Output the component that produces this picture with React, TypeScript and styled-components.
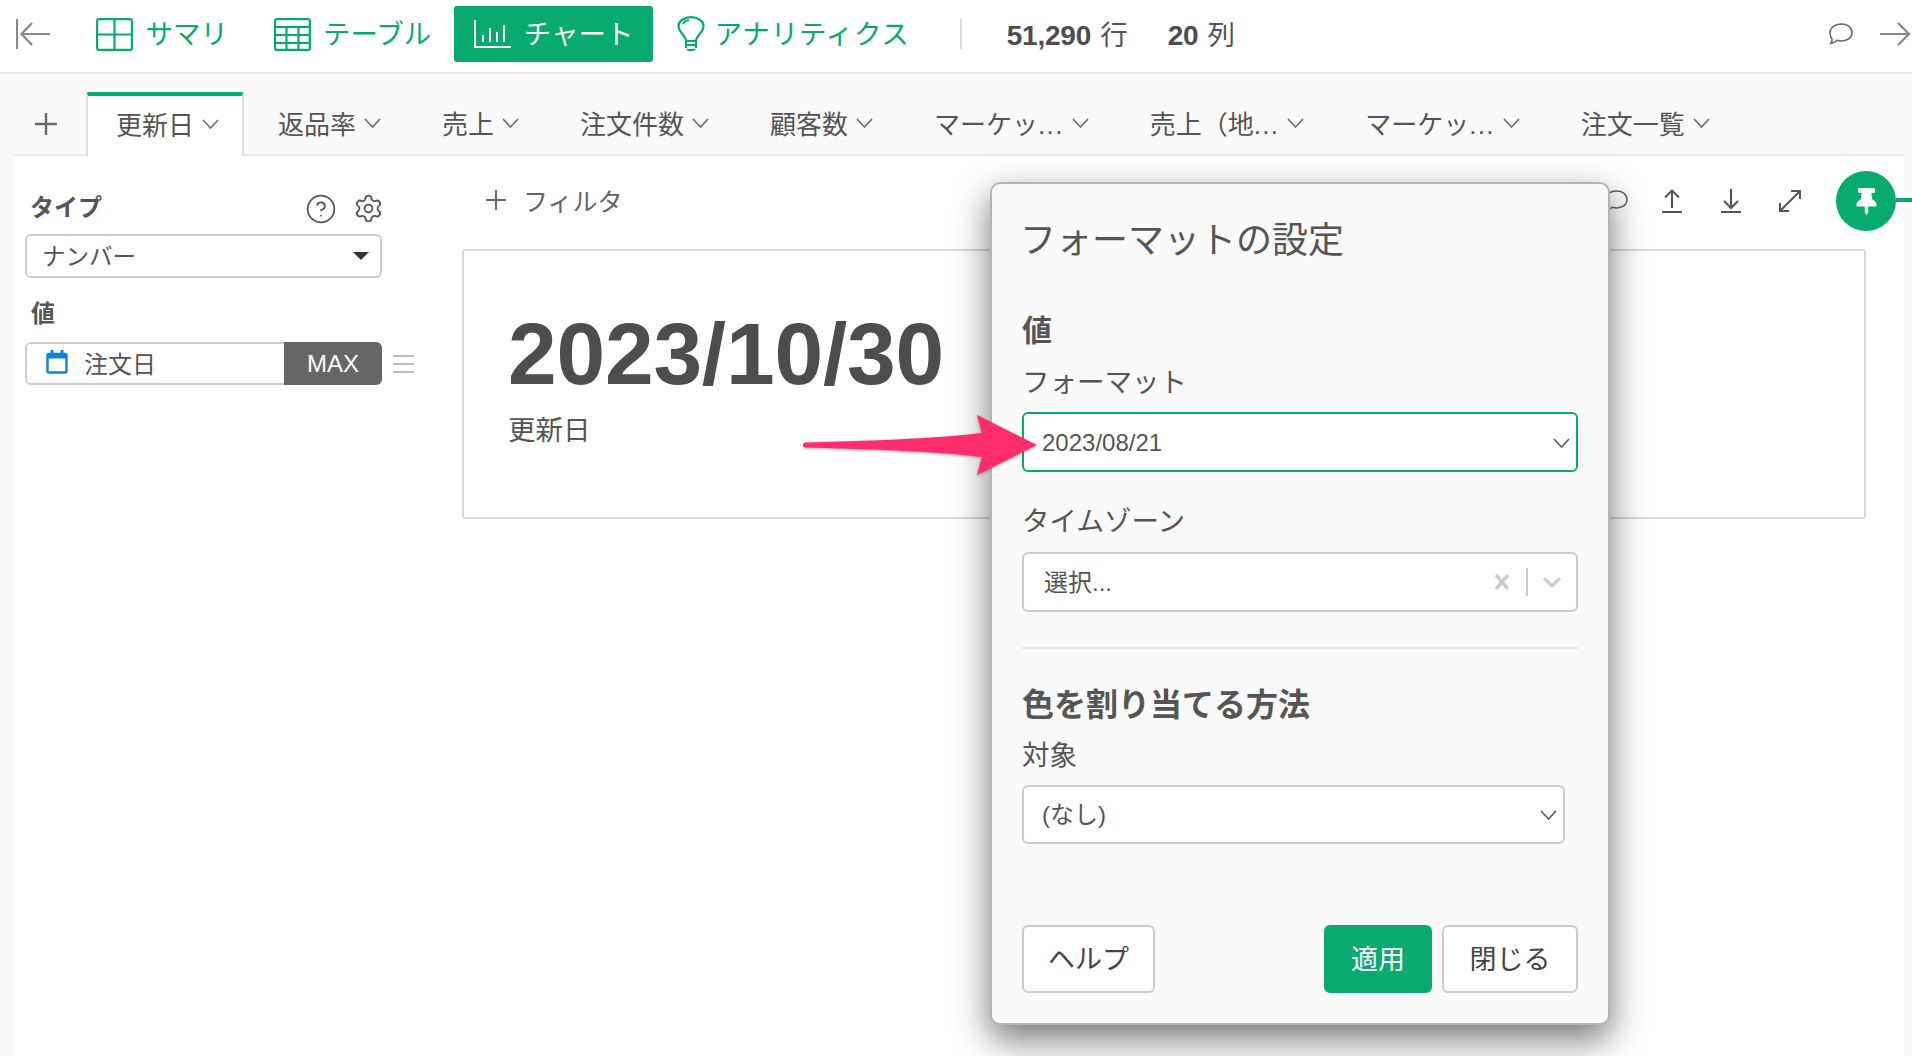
import React from 'react';
import styled, { createGlobalStyle } from 'styled-components';
import { CircleHelp, Settings } from 'lucide-react';
import { FaThumbtack } from 'react-icons/fa';

const GREEN = '#07ab6f';

const GlobalStyle = createGlobalStyle`
  * { box-sizing: border-box; }
  html, body { margin: 0; padding: 0; background: #fff; }
  body {
    font-family: "Liberation Sans", "Noto Sans CJK JP", sans-serif;
    color: #555;
  }
`;

const Page = styled.div`
  position: relative;
  width: 1912px;
  height: 1056px;
  overflow: hidden;
  display: flex;
  flex-direction: column;
  background: #fff;
`;

/* top bar */
const TopBar = styled.header`
  display: flex;
  align-items: center;
  height: 74px;
  flex: none;
  padding: 0 1px 4px 16px;
  border-bottom: 2px solid #e8e8e8;
`;

const NavItem = styled.div<{ $active?: boolean; $left: number; $gap: number }>`
  display: flex;
  align-items: center;
  gap: ${p => p.$gap}px;
  height: 56px;
  margin-left: ${p => p.$left}px;
  padding: 0 19px 0 ${p => (p.$active ? 20 : 18)}px;
  border-radius: 3px;
  font-size: 27.5px;
  color: ${p => (p.$active ? '#fff' : GREEN)};
  background: ${p => (p.$active ? GREEN : 'transparent')};
`;

const NavLabel = styled.span<{ $spread?: number }>`
  padding-bottom: 4px;
  letter-spacing: ${p => p.$spread ?? 0}px;
`;

const Stats = styled.div`
  display: flex;
  align-items: center;
  height: 30px;
  margin-left: 31px;
  padding: 0 0 3px 45px;
  gap: 40px;
  border-left: 2px solid #ddd;
  font-size: 27.5px;
`;

const Stat = styled.span`
  display: flex;
  align-items: baseline;
  gap: 9px;
`;

const StatValue = styled.b`
  font-size: 28px;
  letter-spacing: -0.2px;
  color: #4d4d4d;
`;

const TopRight = styled.div`
  display: flex;
  align-items: center;
  gap: 27px;
  margin-left: auto;
`;

/* tabs */
const Workspace = styled.div`
  flex: 1;
  display: flex;
  flex-direction: column;
  padding: 18px 8px 0 14px;
  background: #fafafa;
`;

const TabRow = styled.div`
  display: flex;
  align-items: flex-end;
  height: 64px;
  flex: none;
  gap: 6px;
  border-bottom: 2px solid #e8e8e8;
`;

const AddTab = styled.div`
  width: 72px;
  margin-right: -6px;
  height: 62px;
  padding: 2px 9px 0 0;
  display: flex;
  align-items: center;
  justify-content: center;
  color: #666;
`;

const Tab = styled.div<{ $active?: boolean }>`
  display: flex;
  align-items: center;
  gap: 8px;
  height: 64px;
  margin-bottom: -2px;
  padding: 0 25px 3px 30px;
  font-size: 26px;
  white-space: nowrap;
  ${p =>
    p.$active
      ? `
    padding: 0 23px 5px 28px;
    margin-right: -2px;
    background: #fff;
    border: 2px solid #ddd;
    border-top: 4px solid ${GREEN};
    border-bottom: 0;
    border-radius: 3px 3px 0 0;
  `
      : ''}
`;

const Dots = styled.span`
  letter-spacing: 1.3px;
`;

/* main area */
const Main = styled.main`
  flex: 1;
  display: flex;
  background: #fff;
`;

const Sidebar = styled.aside`
  width: 448px;
  flex: none;
  padding: 39px 0 0 11px;
`;

const SideHead = styled.div`
  display: flex;
  align-items: center;
  justify-content: space-between;
  width: 356px;
  height: 27px;
  padding-left: 5px;
  margin-bottom: 12px;
`;

const SideLabel = styled.div`
  font-size: 24px;
  font-weight: 700;
  line-height: 27px;
  color: #555;
`;

const HeadTitle = styled(SideLabel)`
  margin-top: -2px;
`;

const HeadIcons = styled.div`
  display: flex;
  align-items: center;
  gap: 16px;
  margin-right: -3px;
  color: #555;
`;

const TypeSelect = styled.div`
  display: flex;
  align-items: center;
  justify-content: space-between;
  width: 357px;
  height: 44px;
  padding: 0 11px 3px 15px;
  border: 2px solid #ccc;
  border-radius: 6px;
  font-size: 23.5px;
`;

const Caret = styled.span`
  width: 0;
  height: 0;
  margin-top: 3px;
  border-left: 8px solid transparent;
  border-right: 8px solid transparent;
  border-top: 8px solid #333;
`;

const ValueLabel = styled(SideLabel)`
  margin: 22px 0 15px 6px;
`;

const ValueRow = styled.div`
  display: flex;
  align-items: center;
  gap: 11px;
`;

const ValuePill = styled.div`
  display: flex;
  align-items: stretch;
  width: 357px;
  height: 43px;
  border: 2px solid #ccc;
  border-radius: 6px;
  font-size: 24px;
`;

const PillField = styled.div`
  flex: 1;
  display: flex;
  align-items: center;
  gap: 16px;
  padding: 0 0 3px 19px;
`;

const PillBadge = styled.div`
  width: 98px;
  margin: -2px -2px -2px 0;
  display: flex;
  align-items: center;
  justify-content: center;
  border-radius: 0 6px 6px 0;
  background: #666;
  color: #fff;
`;

const Handle = styled.div`
  display: flex;
  flex-direction: column;
  gap: 6px;
  width: 21px;
  & > i {
    height: 2px;
    background: #bbb;
  }
`;

const Content = styled.section`
  flex: 1;
  padding-top: 15px;
`;

const Toolbar = styled.div`
  display: flex;
  align-items: center;
  justify-content: space-between;
  width: 1434px;
  height: 60px;
  padding-left: 24px;
`;

const FilterButton = styled.div`
  display: flex;
  align-items: center;
  gap: 17px;
  padding-bottom: 2px;
  font-size: 25px;
  color: #666;
`;

const ToolIcons = styled.div`
  display: flex;
  align-items: center;
  gap: 35px;
  color: #555;
`;

const PinButton = styled.div`
  position: relative;
  width: 60px;
  height: 60px;
  margin-left: -1px;
  display: flex;
  align-items: center;
  justify-content: center;
  border-radius: 50%;
  background: ${GREEN};
  color: #fff;
  &::after {
    content: '';
    position: absolute;
    left: 60px;
    top: 27px;
    width: 16px;
    height: 4px;
    background: ${GREEN};
  }
`;

const Card = styled.div`
  width: 1404px;
  height: 270px;
  margin-top: 18px;
  padding: 53px 0 0 44px;
  border: 2px solid #d8d8d8;
  border-radius: 3px;
`;

const BigValue = styled.div`
  font-size: 87.5px;
  font-weight: 700;
  line-height: 100px;
  letter-spacing: -0.2px;
  color: #4d4d4d;
`;

const BigLabel = styled.div`
  margin-top: 10px;
  font-size: 27.5px;
  line-height: 34px;
`;

/* dialog */
const Dialog = styled.div`
  position: absolute;
  left: 990px;
  top: 182px;
  width: 620px;
  height: 843px;
  display: flex;
  flex-direction: column;
  padding: 0 30px 30px 30px;
  background: #fafafa;
  border: 2px solid #b4b4b4;
  border-radius: 10px;
  box-shadow: 0 14px 36px rgba(0, 0, 0, 0.55);
`;

const DialogTitle = styled.div`
  margin-top: 37px;
  margin-left: -2px;
  font-size: 36px;
  line-height: 40px;
  white-space: nowrap;
`;

const SectionTitle = styled.div<{ $top: number; $size: number }>`
  margin-top: ${p => p.$top}px;
  font-size: ${p => p.$size}px;
  line-height: 38px;
  font-weight: 700;
  color: #555;
`;

const FieldLabel = styled.div<{ $top: number }>`
  margin-top: ${p => p.$top}px;
  font-size: 27.5px;
  line-height: 32px;
`;

const SelectBox = styled.div<{ $top: number; $width?: number; $height?: number; $focus?: boolean }>`
  display: flex;
  align-items: center;
  justify-content: space-between;
  flex: none;
  margin-top: ${p => p.$top}px;
  width: ${p => p.$width ?? 556}px;
  height: ${p => p.$height ?? 60}px;
  padding: ${p => (p.$focus ? '2px' : '0')} 6px 0 18px;
  border: 2px solid ${p => (p.$focus ? GREEN : '#ccc')};
  border-radius: 6px;
  background: #fff;
  font-size: 24px;
  color: #555;
`;

const ZoneSelect = styled(SelectBox)`
  padding-left: 20px;
  padding-right: 15px;
`;

const SelectText = styled.span`
  padding-bottom: 4px;
`;

const ClearGroup = styled.div`
  display: flex;
  align-items: center;
  color: #ccc;
`;

const ClearDivider = styled.span`
  width: 2px;
  height: 28px;
  margin: 0 15px 0 16px;
  background: #ccc;
`;

const Rule = styled.hr`
  width: 556px;
  height: 2px;
  flex: none;
  margin: 35px 0 0;
  border: 0;
  background: #e8e8e8;
`;

const Footer = styled.div`
  display: flex;
  align-items: center;
  gap: 10px;
  margin-top: auto;
`;

const FooterButton = styled.div<{ $width: number; $primary?: boolean }>`
  display: flex;
  align-items: center;
  justify-content: center;
  width: ${p => p.$width}px;
  height: 68px;
  padding-bottom: 3px;
  border-radius: 6px;
  font-size: 27px;
  color: ${p => (p.$primary ? '#fff' : '#444')};
  background: ${p => (p.$primary ? GREEN : '#fff')};
  border: 2px solid ${p => (p.$primary ? GREEN : '#ccc')};
`;

const Spacer = styled.div`
  flex: 1;
`;

const ArrowMark = styled.svg`
  position: absolute;
  left: 795px;
  top: 405px;
  filter: drop-shadow(0 1px 1.5px rgba(0, 0, 0, 0.35));
`;

/* drawings */
const BackIcon = () => (
  <svg width="35" height="32" viewBox="0 0 35 32" fill="none" stroke="#888" strokeWidth="2.2">
    <path d="M1 1v30M34 16H6M16 5 5.5 16 16 27" />
  </svg>
);

const ForwardIcon = () => (
  <svg width="31" height="26" viewBox="0 0 31 26" fill="none" stroke="#888" strokeWidth="2.2">
    <path d="M0 13h29M18 2l11 11-11 11" />
  </svg>
);

const CommentIcon = ({ shift = 0 }: { shift?: number }) => (
  <svg width="24" height="22" viewBox="0 0 24 22" fill="none" stroke="#666" strokeWidth="1.5" style={{ marginRight: shift }}>
    <path d="M12.5 1C18.5 1 23 4.3 23 9.5S18.5 18 12.5 18c-1.6 0-3-.2-4.3-.7C6.500 19 4 20.500 1.800 20.500c1-1.200 1.500-2.500 1.300-4.500C1.700 14.500 1 12 1 9.500 1 4.300 6.500 1 12.500 1Z" />
  </svg>
);

const SummaryIcon = () => (
  <svg width="37" height="33" viewBox="0 0 37 33" fill="none" stroke={GREEN} strokeWidth="2.2">
    <rect x="1.100" y="1.100" width="34.800" height="30.800" rx="2" />
    <path d="M18.500 1v31M1 16.500h35" />
  </svg>
);

const TableIcon = () => (
  <svg width="37" height="33" viewBox="0 0 37 33" fill="none" stroke={GREEN} strokeWidth="2.2">
    <rect x="1.100" y="1.100" width="34.800" height="30.800" rx="2" />
    <path d="M1 9h35M1 17h35M1 25h35M12.500 9v23M24.500 9v23" />
  </svg>
);

const ChartIcon = () => (
  <svg width="37" height="28" viewBox="0 0 37 28" fill="none" stroke="#fff" strokeWidth="2">
    <path d="M1 0v27h36M9 15v7M16 8v14M23 12v10M30 5v17" />
  </svg>
);

const BulbIcon = () => (
  <svg width="28" height="36" viewBox="0 0 28 36" fill="none" stroke={GREEN} strokeWidth="2.200">
    <path d="M9 25c0-3-2-5-4.500-8C2.500 14.500 1.500 12.500 1.500 10c0-5 5.500-8.800 12.500-8.800S26.500 5 26.500 10c0 2.500-1 4.500-3 7-2.500 3-4.500 5-4.500 8Z" />
    <path d="M6 8c1-2.500 3.500-3.800 6-4" />
    <path d="M9 29h10M10 33c1 1.500 7 1.500 8 0M9 25v7M19 25v7" />
  </svg>
);

const PlusIcon = ({ size }: { size: number }) => (
  <svg width={size} height={size} viewBox="0 0 22 22" fill="none" stroke="#666" strokeWidth="2.400">
    <path d="M11 0v22M0 11h22" />
  </svg>
);

const Chevron = ({ color = '#666', bold, width = 17 }: { color?: string; bold?: boolean; width?: number }) => (
  <svg width={width} height="10" viewBox="0 0 17 10" fill="none" stroke={color} strokeWidth={bold ? 3 : 1.500} preserveAspectRatio="none">
    <path d="M1 1l7.500 8L16 1" />
  </svg>
);

const CalendarIcon = () => (
  <svg width="22" height="24" viewBox="0 0 22 24" fill="none" stroke="#0b84d6" strokeWidth="2.400">
    <rect x="1.500" y="4" width="19" height="18.500" rx="1.500" />
    <path d="M1.500 6.500h19" strokeWidth="4" />
    <path d="M6 0v5M16 0v5" strokeWidth="3" />
  </svg>
);

const UploadIcon = () => (
  <svg width="24" height="24" viewBox="0 0 24 24" fill="none" stroke="#555" strokeWidth="2">
    <path d="M2 23h20M12 19V1.500M5 8.500l7-7 7 7" />
  </svg>
);

const DownloadIcon = () => (
  <svg width="24" height="24" viewBox="0 0 24 24" fill="none" stroke="#555" strokeWidth="2">
    <path d="M2 23h20M12 0v19M5 12l7 7 7-7" />
  </svg>
);

const ExpandIcon = () => (
  <svg width="24" height="24" viewBox="0 0 24 24" fill="none" stroke="#555" strokeWidth="2">
    <path d="M2 22 22 2M13 2h9v8M2 14v8h9" />
  </svg>
);

const ClearIcon = () => (
  <svg width="16" height="16" viewBox="0 0 16 16" fill="none" stroke="#ccc" strokeWidth="3.500">
    <path d="M2 1l12 14M14 1 2 15" />
  </svg>
);

const navItems = [
  { label: 'サマリ', icon: <SummaryIcon />, left: 27, gap: 12.5 },
  { label: 'テーブル', icon: <TableIcon />, left: 8.5, gap: 12.5 },
  { label: 'チャート', icon: <ChartIcon />, left: 4, gap: 12.5, active: true },
  { label: 'アナリティクス', icon: <BulbIcon />, left: 6.5, gap: 9.5, spread: 0.8 },
];

const tabs = [
  { label: '更新日' },
  { label: '返品率' },
  { label: '売上' },
  { label: '注文件数' },
  { label: '顧客数' },
  { label: 'マーケッ', cut: true },
  { label: '売上（地', cut: true },
  { label: 'マーケッ', cut: true },
  { label: '注文一覧' },
];

const App = () => (
  <Page>
    <GlobalStyle />
    <TopBar>
      <BackIcon />
      {navItems.map(item => (
        <NavItem key={item.label} $left={item.left} $gap={item.gap} $active={item.active}>
          {item.icon}
          <NavLabel $spread={item.spread}>{item.label}</NavLabel>
        </NavItem>
      ))}
      <Stats>
        <Stat>
          <StatValue>51,290</StatValue> 行
        </Stat>
        <Stat>
          <StatValue>20</StatValue> 列
        </Stat>
      </Stats>
      <TopRight>
        <CommentIcon />
        <ForwardIcon />
      </TopRight>
    </TopBar>

    <Workspace>
      <TabRow>
        <AddTab>
          <PlusIcon size={22} />
        </AddTab>
        {tabs.map((tab, i) => (
          <Tab key={i} $active={i === 0}>
            <span>
              {tab.label}
              {tab.cut && <Dots>...</Dots>}
            </span>
            <Chevron />
          </Tab>
        ))}
      </TabRow>

      <Main>
        <Sidebar>
          <SideHead>
            <HeadTitle>タイプ</HeadTitle>
            <HeadIcons>
              <CircleHelp size={32} strokeWidth={1.3} />
              <Settings size={31} strokeWidth={1.4} />
            </HeadIcons>
          </SideHead>
          <TypeSelect>
            ナンバー
            <Caret />
          </TypeSelect>
          <ValueLabel>値</ValueLabel>
          <ValueRow>
            <ValuePill>
              <PillField>
                <CalendarIcon />
                注文日
              </PillField>
              <PillBadge>MAX</PillBadge>
            </ValuePill>
            <Handle>
              <i />
              <i />
              <i />
            </Handle>
          </ValueRow>
        </Sidebar>

        <Content>
          <Toolbar>
            <FilterButton>
              <PlusIcon size={20} />
              フィルタ
            </FilterButton>
            <ToolIcons>
              <CommentIcon shift={-3} />
              <UploadIcon />
              <DownloadIcon />
              <ExpandIcon />
              <PinButton>
                <FaThumbtack size={27} />
              </PinButton>
            </ToolIcons>
          </Toolbar>
          <Card>
            <BigValue>2023/10/30</BigValue>
            <BigLabel>更新日</BigLabel>
          </Card>
        </Content>
      </Main>
    </Workspace>

    <Dialog>
      <DialogTitle>フォーマットの設定</DialogTitle>
      <SectionTitle $top={51} $size={30}>値</SectionTitle>
      <FieldLabel $top={17}>フォーマット</FieldLabel>
      <SelectBox $top={13} $focus>
        2023/08/21
        <Chevron color="#555" />
      </SelectBox>
      <FieldLabel $top={34}>タイムゾーン</FieldLabel>
      <ZoneSelect $top={14}>
        <SelectText>選択...</SelectText>
        <ClearGroup>
          <ClearIcon />
          <ClearDivider />
          <Chevron color="#ccc" bold width={18} />
        </ClearGroup>
      </ZoneSelect>
      <Rule />
      <SectionTitle $top={37} $size={32}>色を割り当てる方法</SectionTitle>
      <FieldLabel $top={16}>対象</FieldLabel>
      <SelectBox $top={13} $width={543} $height={59}>
        <SelectText>(なし)</SelectText>
        <Chevron color="#555" />
      </SelectBox>
      <Footer>
        <FooterButton $width={133}>ヘルプ</FooterButton>
        <Spacer />
        <FooterButton $width={108} $primary>適用</FooterButton>
        <FooterButton $width={136}>閉じる</FooterButton>
      </Footer>
    </Dialog>

    <ArrowMark width="250" height="80" viewBox="795 405 250 80">
      <path
        d="M805.500 442.500C860 441 935 439 982 433L977 415L1037 445L977 475L982 457C935 451 860 449 805.500 447.500C802 447 802 443 805.500 442.500Z"
        fill="#ff2d6c"
      />
    </ArrowMark>
  </Page>
);

export default App;
